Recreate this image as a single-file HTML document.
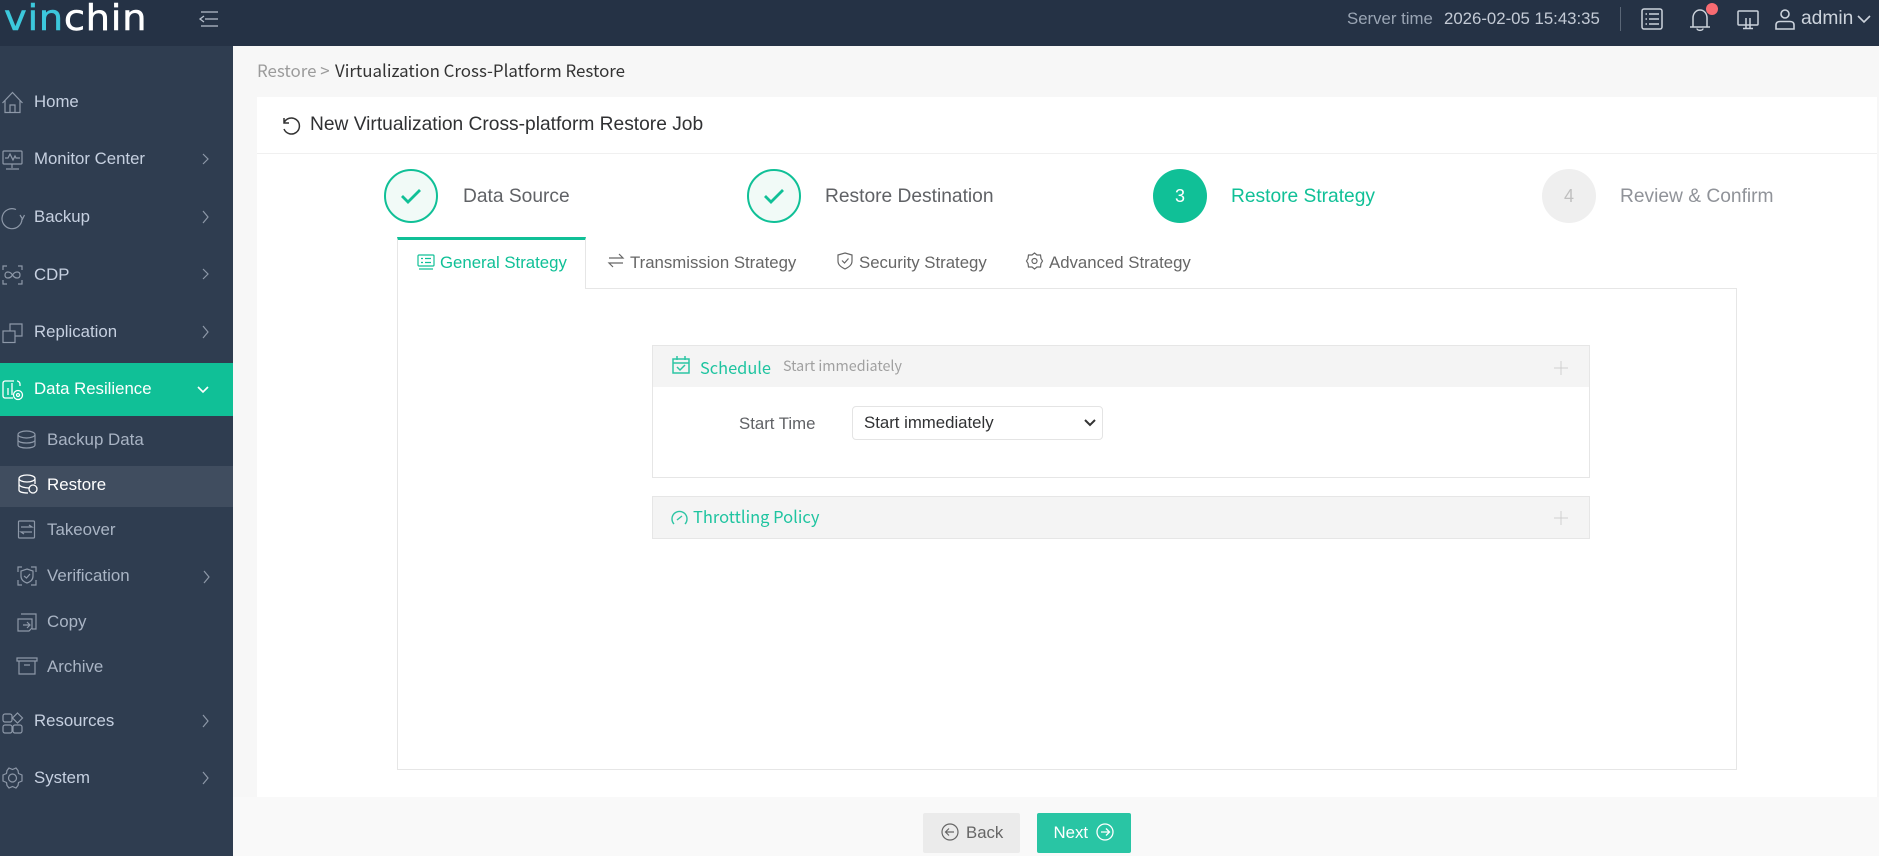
<!DOCTYPE html>
<html><head><meta charset="utf-8"><style>
*{box-sizing:border-box}
html,body{margin:0;padding:0;width:1879px;height:856px;overflow:hidden;background:#f7f7f7;font-family:"Liberation Sans",sans-serif}
.a{position:absolute;white-space:nowrap}
svg{position:absolute;overflow:visible;fill:none}
.m{position:absolute;left:34px;font-size:16.800px;line-height:20px;color:#c6d0e0;white-space:nowrap}
.s{position:absolute;left:47px;font-size:16.900px;line-height:20px;color:#a9b4c4;white-space:nowrap}
.nt{font-family:"Noto Sans CJK JP","Liberation Sans",sans-serif}
.st{position:absolute;font-size:19.200px;line-height:22px;top:186px;white-space:nowrap}
.tb{position:absolute;top:253px;font-size:16.800px;line-height:20px;color:#666;white-space:nowrap}
</style></head><body>
<div class="a" style="left:0;top:0;width:1879px;height:46px;background:#253245"></div>
<div class="a" style="left:0;top:46px;width:233px;height:810px;background:#2f3d50"></div>
<div class="a" style="left:4px;top:-6px;font-family:'DejaVu Sans',sans-serif;font-size:36px;line-height:50px;letter-spacing:0.6px;color:#fff;-webkit-text-stroke:0.5px;transform:scaleX(1.07);transform-origin:0 0"><span style="color:#3cc8dc">vin</span>chin</div>
<svg style="left:199px;top:11px" width="20" height="16" stroke="#b6bfcc" stroke-width="1.3"><path d="M2 1H19M6 8H19M2 15H19M5 5L1 8L5 11"/></svg>

<div class="a" style="left:1347px;top:9px;font-size:16.800px;line-height:20px;color:#9aa5b4">Server time</div>
<div class="a" style="left:1444px;top:9px;font-size:16.800px;line-height:20px;color:#c3cad5">2026-02-05 15:43:35</div>
<div class="a" style="left:1620px;top:7px;width:1px;height:24px;background:#5a6676"></div>
<svg style="left:1641px;top:8px" width="22" height="22" stroke="#ccd3dc" stroke-width="1.5"><rect x="1" y="1" width="20" height="20" rx="2"/><path d="M4.500 6H6M8 6H18M4.500 11H6M8 11H18M4.500 16H6M8 16H18"/></svg>
<svg style="left:1689px;top:9px" width="22" height="22" stroke="#ccd3dc" stroke-width="1.5"><path d="M1 18H21M4 18V9C4 4.500 7 1 11 1S18 4.500 18 9V18M8 19.500C8 22 14 22 14 19.500"/></svg>
<div class="a" style="left:1706px;top:3px;width:12px;height:12px;border-radius:50%;background:#f86b72"></div>
<svg style="left:1737px;top:10px" width="22" height="20" stroke="#ccd3dc" stroke-width="1.5"><rect x="1" y="1" width="20" height="14" rx="1"/><path d="M6 18.500H16M9 8V18M13 8V18"/></svg>
<svg style="left:1775px;top:8px" width="20" height="22" stroke="#ccd3dc" stroke-width="1.6"><circle cx="10" cy="6" r="4"/><path d="M1 21V17C1 14.500 3 13.500 5 13.500H15C17 13.500 19 14.500 19 17V21Z"/></svg>
<div class="a" style="left:1801px;top:9px;font-size:19.200px;line-height:20px;color:#ccd3dc">admin</div>
<svg style="left:1856px;top:14px" width="16" height="10" stroke="#ccd3dc" stroke-width="1.6"><path d="M2 2L8 8L14 2"/></svg>

<!-- sidebar -->
<div class="a" style="left:0;top:363px;width:233px;height:53px;background:#10c097"></div>
<div class="a" style="left:0;top:466px;width:233px;height:41px;background:#404d5f"></div>
<div class="m" style="top:92px">Home</div>
<div class="m" style="top:149px">Monitor Center</div>
<div class="m" style="top:207px">Backup</div>
<div class="m" style="top:265px">CDP</div>
<div class="m" style="top:322px">Replication</div>
<div class="m" style="top:379px;color:#fff">Data Resilience</div>
<div class="s" style="top:430px">Backup Data</div>
<div class="s" style="top:475px;color:#fff">Restore</div>
<div class="s" style="top:520px">Takeover</div>
<div class="s" style="top:566px">Verification</div>
<div class="s" style="top:612px">Copy</div>
<div class="s" style="top:657px">Archive</div>
<div class="m" style="top:711px">Resources</div>
<div class="m" style="top:768px">System</div>

<svg style="left:0;top:0" width="233" height="856" stroke="#8d98a8" stroke-width="1.2">
<path d="M203 154L208 159L203 164M203 211L208 217L203 223M203 269L208 274L203 279M203 326L208 332L203 338M204 571L209 577L204 583M203 715L208 721L203 727M203 772L208 778L203 784"/>
<path d="M2.500 103L12.500 92.500L22.500 103M5 100.500V112.500H20V100.500M10 112.500V105H15V112.500"/>
<rect x="3" y="151" width="19" height="13" rx="1"/><path d="M5 158H8L10 154L13 160L15 156L16 158H20M12 164V168M6 169H19"/>
<path d="M22 219A10 10 0 1 1 16 209.500M20 215L22.500 219L24.500 215"/>
<path d="M3 270V266H7M18 266H22V270M3 280V284H7M18 284H22V280M12.500 275C10 271 5 271 5 275S10 279 12.500 275S20 271 20 275S15 279 12.500 275"/>
<rect x="3" y="331" width="12" height="11.500"/><path d="M10 331V324H22V336H15"/>
<g stroke-width="1.2"><ellipse cx="26.500" cy="434.500" rx="8.500" ry="3.500"/><path d="M18 435V445C18 449 35 449 35 445V435M18 440C18 444 35 444 35 440"/></g>
<rect x="18.500" y="521" width="16" height="17" rx="1"/><path d="M21 527H32L29 525M32 532H21L24 534"/>
<path d="M18 572V567H22M31 567H36V572M18 580V585H22M31 585H36V580M27 569L33 571V576C33 580 30 582 27 583C24 582 21 580 21 576V571ZM24 576L26.500 578L30 574"/>
<path d="M21 614H36V629H32M18 619H32V628L29 631H18Z"/><path d="M23 625H30M27 622L30 625L27 628"/>
<path d="M17 658H37V661H17ZM19 661V674H35V661M24 665H30"/>
<rect x="3" y="714" width="9" height="8" rx="2"/><path d="M17.500 713L22.500 718L17.500 723L12.500 718Z"/><rect x="3" y="725" width="9" height="8" rx="2"/><rect x="13" y="725" width="9" height="8" rx="2"/>
<circle cx="12.500" cy="778" r="4"/><path d="M9 768L12.500 769.500L16 768L18 770.500L18.500 773.500L22 775L22 781L18.500 782.500L18 785.500L16 788L12.500 786.500L9 788L7 785.500L6.500 782.500L3 781L3 775L6.500 773.500L7 770.500Z"/>
</svg>
<svg style="left:0;top:0" width="233" height="856" stroke="#ffffff" stroke-width="1.3">
<path d="M198 387L203 392L208 387" stroke-width="1.6"/>
<path d="M14 381H5C4 381 3 382 3 383V396C3 397 4 398 5 398H13M8 395V388M12 395V383M17 381C18 381 20 382 20 384V386"/>
<circle cx="18" cy="395" r="4.500"/><circle cx="18" cy="395" r="1.500"/>
<ellipse cx="27" cy="478.500" rx="8" ry="3.500"/><path d="M19 479V490C19 492 23 493 28 493M35 479V484M19 484C19 487 26 488 29 488"/><circle cx="33" cy="489" r="4"/>
</svg>

<!-- content -->
<div class="a nt" style="left:257px;top:58px;font-size:16.900px;line-height:24px;color:#9b9b9b">Restore &gt; </div>
<div class="a nt" style="left:335px;top:58px;font-size:16.900px;line-height:24px;color:#333">Virtualization Cross-Platform Restore</div>
<div class="a" style="left:257px;top:97px;width:1620px;height:700px;background:#fff"></div>
<div class="a" style="left:257px;top:153px;width:1620px;height:1px;background:#f0f0f0"></div>
<div class="a" style="left:233px;top:797px;width:1646px;height:59px;background:#f9f9f9"></div>
<svg style="left:280px;top:115px" width="20" height="20" stroke="#333" stroke-width="1.5"><path d="M4 3V8H9M4 8A8 8 0 1 1 4 14"/></svg>
<div class="a" style="left:310px;top:114px;font-size:19.200px;line-height:22px;color:#303133">New Virtualization Cross-platform Restore Job</div>

<div class="a" style="left:384px;top:169px;width:54px;height:54px;border-radius:50%;border:2px solid #10c097;background:#f1faf7"></div>
<svg style="left:399px;top:187px" width="24" height="18" stroke="#10c097" stroke-width="2.800"><path d="M3 9L9 15L21 3"/></svg>
<div class="st" style="left:463px;color:#606266">Data Source</div>
<div class="a" style="left:747px;top:169px;width:54px;height:54px;border-radius:50%;border:2px solid #10c097;background:#f1faf7"></div>
<svg style="left:762px;top:187px" width="24" height="18" stroke="#10c097" stroke-width="2.800"><path d="M3 9L9 15L21 3"/></svg>
<div class="st" style="left:825px;color:#606266">Restore Destination</div>
<div class="a" style="left:1153px;top:169px;width:54px;height:54px;border-radius:50%;background:#10c097;color:#fff;font-size:18px;line-height:54px;text-align:center">3</div>
<div class="st" style="left:1231px;color:#10c097">Restore Strategy</div>
<div class="a" style="left:1542px;top:169px;width:54px;height:54px;border-radius:50%;background:#efefef;color:#c0c0c0;font-size:18px;line-height:54px;text-align:center">4</div>
<div class="st" style="left:1620px;color:#909399">Review &amp; Confirm</div>

<!-- tabs -->
<div class="a" style="left:397px;top:288px;width:1340px;height:482px;border:1px solid #e6e6e6;background:#fff"></div>
<div class="a" style="left:397px;top:237px;width:189px;height:52px;background:#fff;border:1px solid #e6e6e6;border-top:3px solid #10c097;border-bottom:0"></div>
<svg style="left:417px;top:254px" width="18" height="17" stroke="#10c097" stroke-width="1.200"><rect x="1" y="1" width="16" height="11" rx="1"/><path d="M4 4.500H6M8 4.500H14M4 8.500H6M8 8.500H14M2 15H16"/></svg>
<div class="tb" style="left:440px;color:#10c097">General Strategy</div>
<svg style="left:608px;top:253px" width="16" height="15" stroke="#666" stroke-width="1.200"><path d="M1 5H15L11 1M15 10H1L5 14"/></svg>
<div class="tb" style="left:630px">Transmission Strategy</div>
<svg style="left:837px;top:252px" width="16" height="18" stroke="#666" stroke-width="1.200"><path d="M8 1L15 3V9C15 13 12 15 8 17C4 15 1 13 1 9V3ZM5 8.500L7.500 11L11.500 6.500"/></svg>
<div class="tb" style="left:859px">Security Strategy</div>
<svg style="left:1026px;top:252px" width="17" height="18" stroke="#666" stroke-width="1.200"><circle cx="8.500" cy="9" r="2.500"/><path d="M8.500 1L11 3L14.500 3L15 6.500L16.500 9L15 11.500L14.500 15L11 15L8.500 17L6 15L2.500 15L2 11.500L0.500 9L2 6.500L2.500 3L6 3Z"/></svg>
<div class="tb" style="left:1049px">Advanced Strategy</div>

<!-- accordion -->
<div class="a" style="left:652px;top:345px;width:938px;height:133px;border:1px solid #e6e6e6;background:#fff"></div>
<div class="a" style="left:653px;top:346px;width:936px;height:41px;background:#f4f4f4"></div>
<svg style="left:672px;top:356px" width="18" height="18" stroke="#2cc5a4" stroke-width="1.500"><path d="M1 3H17V17H1ZM1 7H17M5 0V4M13 0V4M5 11L8 14L13 9"/></svg>
<div class="a nt" style="left:700px;top:355px;font-size:16.400px;line-height:24px;color:#1fc4a0">Schedule</div>
<div class="a nt" style="left:783px;top:356px;font-size:14.300px;line-height:20px;color:#a0a0a0">Start immediately</div>
<svg style="left:1554px;top:361px" width="14" height="14" stroke="#cfcfcf" stroke-width="1"><path d="M0 7H14M7 0V14"/></svg>
<div class="a" style="left:739px;top:414px;font-size:16.800px;line-height:20px;color:#606266">Start Time</div>
<div class="a" style="left:852px;top:406px;width:251px;height:34px;border:1px solid #e4e4e4;border-radius:4px;background:#fff"></div>
<div class="a" style="left:864px;top:413px;font-size:16.800px;line-height:20px;color:#303133">Start immediately</div>
<svg style="left:1084px;top:419px" width="12" height="9" stroke="#333" stroke-width="2"><path d="M1 1L6 6L11 1"/></svg>

<div class="a" style="left:652px;top:496px;width:938px;height:43px;border:1px solid #e6e6e6;background:#f4f4f4"></div>
<svg style="left:671px;top:510px" width="17" height="15" stroke="#2cc5a4" stroke-width="1.400"><path d="M3 14A7.500 7.500 0 1 1 14 14M6 10L11 6"/></svg>
<div class="a nt" style="left:693px;top:504px;font-size:16.500px;line-height:24px;color:#1fc4a0">Throttling Policy</div>
<svg style="left:1554px;top:511px" width="14" height="14" stroke="#cfcfcf" stroke-width="1"><path d="M0 7H14M7 0V14"/></svg>

<!-- buttons -->
<div class="a" style="left:923px;top:813px;width:97px;height:40px;border-radius:2px;background:#ebebeb"></div>
<svg style="left:941px;top:823px" width="18" height="18" stroke="#666" stroke-width="1.200"><circle cx="9" cy="9" r="8"/><path d="M13 9H5M8 5.500L4.500 9L8 12.500"/></svg>
<div class="a" style="left:966px;top:823px;font-size:16.800px;line-height:20px;color:#666">Back</div>
<div class="a" style="left:1053.500px;top:823px;font-size:16.800px;line-height:20px;color:#fff;z-index:2">Next</div>
<div class="a" style="left:1037px;top:813px;width:94px;height:40px;border-radius:2px;background:#29c5a4"></div>
<svg style="left:1096px;top:823px" width="18" height="18" stroke="#fff" stroke-width="1.300"><circle cx="9" cy="9" r="8"/><path d="M5 9H13M10 5.500L13.500 9L10 12.500"/></svg>
</body></html>
